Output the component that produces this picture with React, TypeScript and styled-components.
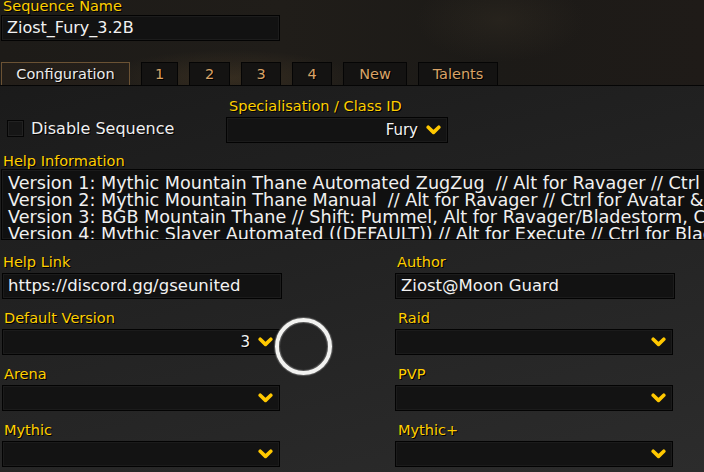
import React from "react";
import styled, { createGlobalStyle } from "styled-components";

const Global = createGlobalStyle`
  html, body { margin: 0; padding: 0; background: #1c1c1c; }
  * { box-sizing: border-box; }
`;

const Page = styled.div`
  position: relative;
  width: 704px;
  height: 472px;
  overflow: hidden;
  font-family: "DejaVu Sans", "Liberation Sans", sans-serif;
  background: linear-gradient(165deg, #181818 0%, #1f1f1f 35%, #262626 70%, #2c2c2c 100%);
  display: flex;
  flex-direction: column;
`;

const Header = styled.header`
  display: flex;
  flex-direction: column;
  border-bottom: 1px solid #050505;
  background:
    radial-gradient(ellipse 180px 40px at 230px 78px, rgba(110, 85, 50, 0.28), transparent 70%),
    radial-gradient(ellipse 120px 60px at 500px 20px, rgba(70, 60, 45, 0.25), transparent 70%),
    linear-gradient(90deg, #1d1b18 0%, #201d19 40%, #1c1a17 70%, #1f1b18 100%);
`;

const Label = styled.div<{ $indent?: number }>`
  height: 15px;
  line-height: 15px;
  font-size: 14.5px;
  color: #ffcf00;
  text-shadow: 1px 1px 0 #000;
  padding-left: ${(p) => p.$indent ?? 3}px;
  white-space: nowrap;
`;

const HeaderLabel = styled(Label)`
  height: 13px;
  line-height: 13px;
`;

const TextBox = styled.div<{ $width: number }>`
  width: ${(p) => p.$width}px;
  height: 26px;
  background: #121212;
  border: 1px solid #030303;
  box-shadow: inset 0 0 0 1px #1c1c1c;
  color: #f2f2f2;
  font-size: 16.5px;
  line-height: 24px;
  padding-left: 5px;
  white-space: nowrap;
  overflow: hidden;
`;

const NameBox = styled(TextBox)`
  margin-top: 2px;
  margin-left: 1px;
  height: 26px;
  font-size: 16px;
`;

const Tabs = styled.nav`
  display: flex;
  gap: 11px;
  margin-top: 21px;
  padding-left: 1px;
`;

const Tab = styled.div<{ $width: number; $active?: boolean }>`
  width: ${(p) => p.$width}px;
  height: 23px;
  display: flex;
  align-items: center;
  justify-content: center;
  font-size: 14.5px;
  border: 1px solid ${(p) => (p.$active ? "#6b5234" : "#050505")};
  border-bottom: none;
  background: ${(p) => (p.$active ? "rgba(40, 33, 26, 0.6)" : "#141312")};
  color: ${(p) => (p.$active ? "#ececec" : "#d9a366")};
  text-shadow: 1px 1px 0 #000;
`;

const Body = styled.main`
  display: flex;
  flex-direction: column;
  padding-top: 13px;
`;

const TopRow = styled.div`
  display: flex;
  align-items: flex-end;
`;

const CheckRow = styled.label`
  width: 226px;
  display: flex;
  align-items: center;
  gap: 7px;
  padding-left: 7px;
  height: 26px;
  padding-bottom: 3px;
  color: #f0f0f0;
  font-size: 16px;
  text-shadow: 1px 1px 0 #000;
`;

const CheckBox = styled.span`
  width: 17px;
  height: 17px;
  border: 1px solid #050505;
  background: #161616;
  box-shadow: inset 0 0 0 1px #222;
`;

const Field = styled.div`
  display: flex;
  flex-direction: column;
  gap: 3px;
`;

const SelectBox = styled.div<{ $width: number }>`
  width: ${(p) => p.$width}px;
  height: 26px;
  background: #131313;
  border: 1px solid #030303;
  box-shadow: inset 0 0 0 1px #1b1b1b;
  display: flex;
  align-items: center;
  justify-content: flex-end;
  gap: 8px;
  padding-right: 6px;
  color: #f4f4f4;
  font-size: 15px;
  text-shadow: 1px 1px 0 #000;
`;

const HelpLabel = styled(Label)`
  margin-top: 11px;
`;

const HelpBox = styled.div`
  margin-left: 1px;
  width: 760px;
  height: 71px;
  background: #101010;
  border: 1px solid #030303;
  box-shadow: inset 0 0 0 1px #1a1a1a;
  padding: 5px 0 0 6px;
  overflow: hidden;
  color: #f0f0f0;
  font-size: 17.6px;
  line-height: 17px;
  white-space: pre;
`;

const Grid = styled.section`
  display: grid;
  grid-template-columns: 280px 280px;
  column-gap: 113px;
  row-gap: 12px;
  margin-top: 15px;
  padding-left: 2px;
`;

const Ring = styled.div`
  position: absolute;
  left: 275px;
  top: 318px;
  width: 57px;
  height: 57px;
  border-radius: 50%;
  border: 4px solid #f2f2f0;
  box-shadow: 0 0 1px 1px rgba(120, 120, 120, 0.7), inset 0 0 1px 1px rgba(120, 120, 120, 0.7);
`;

const Chevron = () => (
  <svg width="15" height="10" viewBox="0 0 15 10">
    <path d="M2.2 2.2 L7.5 7.4 L12.8 2.2" fill="none" stroke="#ffc800" strokeWidth="3.6" strokeLinecap="round" strokeLinejoin="round" />
  </svg>
);

const Select = ({ width, value }: { width: number; value?: string }) => (
  <SelectBox $width={width}>
    {value ? <span>{value}</span> : null}
    <Chevron />
  </SelectBox>
);

const tabs: { name: string; width: number; active?: boolean }[] = [
  { name: "Configuration", width: 129, active: true },
  { name: "1", width: 37 },
  { name: "2", width: 41 },
  { name: "3", width: 40 },
  { name: "4", width: 40 },
  { name: "New", width: 64 },
  { name: "Talents", width: 80 },
];

const helpText = [
  "Version 1: Mythic Mountain Thane Automated ZugZug  // Alt for Ravager // Ctrl for Avatar & Bladestorm",
  "Version 2: Mythic Mountain Thane Manual  // Alt for Ravager // Ctrl for Avatar & Bladestorm",
  "Version 3: BGB Mountain Thane // Shift: Pummel, Alt for Ravager/Bladestorm, CTRL for Avatar",
  "Version 4: Mythic Slayer Automated ((DEFAULT)) // Alt for Execute // Ctrl for Bladestorm",
].join("\n");

export default function App() {
  return (
    <>
      <Global />
      <Page>
        <Header>
          <HeaderLabel>Sequence Name</HeaderLabel>
          <NameBox $width={279}>Ziost_Fury_3.2B</NameBox>
          <Tabs>
            {tabs.map((t) => (
              <Tab key={t.name} $width={t.width} $active={t.active}>
                {t.name}
              </Tab>
            ))}
          </Tabs>
        </Header>
        <Body>
          <TopRow>
            <CheckRow>
              <CheckBox />
              Disable Sequence
            </CheckRow>
            <Field>
              <Label>Specialisation / Class ID</Label>
              <Select width={222} value="Fury" />
            </Field>
          </TopRow>
          <HelpLabel>Help Information</HelpLabel>
          <HelpBox>{helpText}</HelpBox>
          <Grid>
            <Field>
              <Label $indent={1}>Help Link</Label>
              <TextBox $width={280}>https://discord.gg/gseunited</TextBox>
            </Field>
            <Field>
              <Label $indent={2}>Author</Label>
              <TextBox $width={280}>Ziost@Moon Guard</TextBox>
            </Field>
            <Field>
              <Label $indent={2}>Default Version</Label>
              <Select width={278} value="3" />
            </Field>
            <Field>
              <Label $indent={3}>Raid</Label>
              <Select width={278} />
            </Field>
            <Field>
              <Label $indent={2}>Arena</Label>
              <Select width={278} />
            </Field>
            <Field>
              <Label $indent={3}>PVP</Label>
              <Select width={278} />
            </Field>
            <Field>
              <Label $indent={2}>Mythic</Label>
              <Select width={278} />
            </Field>
            <Field>
              <Label $indent={3}>Mythic+</Label>
              <Select width={278} />
            </Field>
          </Grid>
        </Body>
        <Ring />
      </Page>
    </>
  );
}
